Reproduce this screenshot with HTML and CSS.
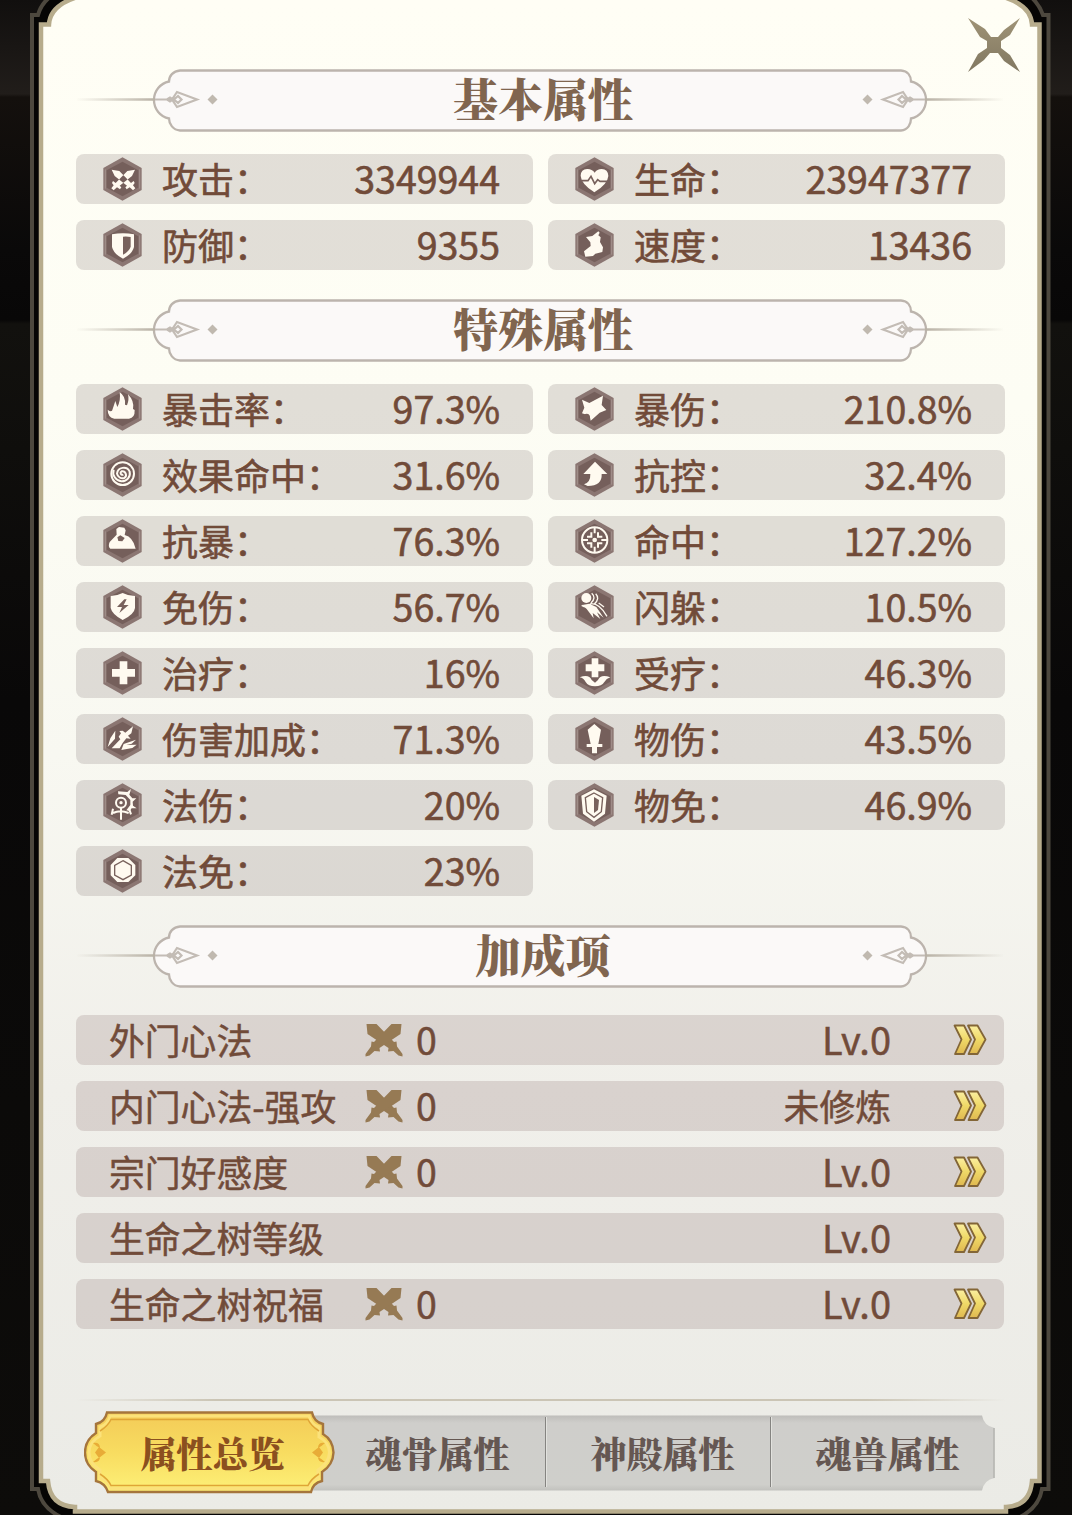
FILE: index.html
```html
<!DOCTYPE html>
<html lang="zh-CN">
<head>
    <meta charset="UTF-8">
    <meta name="viewport" content="width=device-width, initial-scale=1.0">
    <title>属性总览</title>
    <link rel="stylesheet" href="styles.css">
</head>
<body>
    <!-- shared shapes -->
    <svg class="defs" width="0" height="0">
        <defs>
            <linearGradient id="panel-fill" x1="0" y1="0" x2="0" y2="1">
                <stop offset="0" stop-color="#fffef5"/>
                <stop offset=".27" stop-color="#fdfdf4"/>
                <stop offset=".5" stop-color="#f8f8f1"/>
                <stop offset=".72" stop-color="#f0efea"/>
                <stop offset="1" stop-color="#ebebe6"/>
            </linearGradient>
            <linearGradient id="line-left" gradientUnits="userSpaceOnUse" x1="0" y1="0" x2="80" y2="0">
                <stop offset="0" stop-color="#b9b2a6" stop-opacity="0"/>
                <stop offset="1" stop-color="#b9b2a6"/>
            </linearGradient>
            <linearGradient id="gold" x1="0" y1="0" x2="0" y2="1">
                <stop offset="0" stop-color="#f3cb58"/>
                <stop offset=".5" stop-color="#f8dc60"/>
                <stop offset="1" stop-color="#fdf078"/>
            </linearGradient>
            <linearGradient id="bar-fill" x1="0" y1="0" x2="0" y2="1">
                <stop offset="0" stop-color="#bebdba"/>
                <stop offset=".1" stop-color="#cfcecb"/>
                <stop offset=".92" stop-color="#cfcfcb"/>
                <stop offset="1" stop-color="#c2c2be"/>
            </linearGradient>
            <linearGradient id="chevron" x1="0" y1="0" x2="0" y2="1">
                <stop offset="0" stop-color="#fbefa0"/>
                <stop offset=".5" stop-color="#efd867"/>
                <stop offset="1" stop-color="#dfb850"/>
            </linearGradient>
            <linearGradient id="close-fill" x1="0" y1="0" x2="0" y2="1">
                <stop offset="0" stop-color="#9f9376"/>
                <stop offset="1" stop-color="#817861"/>
            </linearGradient>
        </defs>
        <symbol id="hex" viewBox="0 0 117 132">
            <path d="M58.5 1 116 33v66l-57.500 32L1 99V33z" fill="#8b7672"/>
            <path d="M58.500 14 106 40v52l-47.500 26L11 92V40z" fill="#755f5b"/>
            <path d="M7 95V37M110 95V37" stroke="#a79692" stroke-width="2.500"/>
        </symbol>
        <symbol id="banner" viewBox="0 0 930 64">
            <path d="M105 2.500H826C833 3 836 8 836 13.500A18.900 18.900 0 0 1 836 50.500C836 56 833 62 826 62.500H105C98 62 94 56 94 50.500A18.900 18.900 0 0 1 94 13.500C94 8 98 3 105 2.500z" fill="#fbf9f8" stroke="#bcb4ad" stroke-width="2.300"/>
            <g id="banner-end">
                <path d="M2 30.300 80 30.300V32.700H2z" fill="url(#line-left)"/>
                <path d="M80 31.500H97M92 31.500l3-2 3 2-3 2zM97 31.500l5-7.500 20 7.500-20 7.500zM99 31.500l4-3.500 3.500 3.500-3.500 3.500z" fill="none" stroke="#c3bcb5" stroke-width="2.200"/>
                <path d="m137.500 26.500 5 5-5 5-5-5z" fill="#c0b9af"/>
            </g>
            <use href="#banner-end" transform="matrix(-1 0 0 1 930 0)"/>
        </symbol>
        <symbol id="swords" viewBox="0 0 38 34">
            <g fill="#967a54">
                <path id="sword" d="M1.500 1H11.500L29 19 31.500 18.500 32 23.500 37.500 31V33.500L33.500 32.500 28.500 28 23 28.500 23.500 25 2.500 11z"/>
                <use href="#sword" transform="matrix(-1 0 0 1 38 0)"/>
            </g>
        </symbol>
        <symbol id="more" viewBox="0 0 34 32">
            <g fill="url(#chevron)" stroke="#836637" stroke-width="1.800" stroke-linejoin="round">
                <path d="M1.500 1.500H11L18 15.500 11 30H2L8.500 15.500z"/>
                <path d="M15 1.500h9.500L32.500 15.500 24.500 30H15.500L22 15.500z"/>
            </g>
        </symbol>
    </svg>

    <div class="panel">
        <svg class="frame" width="1072" height="1515" viewBox="0 0 1072 1515">
            <path d="M32 15H38Q41 4 50-3H1031Q1039 4 1043 15H1048.500V1489H1042Q1039 1508 1018 1518H63Q41 1508 38 1489H32z" fill="#060504" stroke="#4d483e" stroke-width="4"/>
            <path d="M41 24.500H49Q50 6 76-2.500H1005Q1031 6 1032 24.500H1039.500V1481H1032Q1030 1506 1006 1507V1511.500H75V1507Q50 1506 48 1481H41z" fill="url(#panel-fill)" stroke="#b7ac8c" stroke-width="4.500"/>
        </svg>

        <button class="close" aria-label="关闭">
            <svg width="54" height="56" viewBox="0 0 54 56">
                <path d="M1 1 18 12 24 20H31L37 13 53 1 43 18 34 24V31L43 38 53 55 37 44 31 36H23L17 43 1 55 11 37 20 31V24L13 20z" fill="url(#close-fill)"/>
            </svg>
        </button>

        <section class="section">
            <h2 class="banner"><svg><use href="#banner"/></svg><span>基本属性</span></h2>
            <div class="stats">
                <div class="stat">
                    <svg class="icon" viewBox="0 0 117 132"><use href="#hex"/>
                        <path d="M26 38 49 42 84 78 92 72 95 78 90 85 97 94 90 100 80 91 71 97 67 91 72 86 35 57zM96 38 73 42 38 78 30 72 27 78 32 85 25 94 32 100 42 91 51 97 55 91 50 86 87 57z"/></svg>
                    <span class="label">攻击：</span><span class="value">3349944</span>
                </div>
                <div class="stat">
                    <svg class="icon" viewBox="0 0 117 132"><use href="#hex"/>
                        <path d="M58 106Q18 80 17 56 18 35 38 36 51 36 59 47 66 36 80 36 99 36 100 57 98 82 58 106z"/>
                        <path class="cut" d="M18 71H39L48 58 59 80 68 68 75 73H99"/></svg>
                    <span class="label">生命：</span><span class="value">23947377</span>
                </div>
                <div class="stat">
                    <svg class="icon" viewBox="0 0 117 132"><use href="#hex"/>
                        <path d="M27 34q33-7 66 0v38q-5 21-33 35-28-14-33-35z"/>
                        <path class="dark" d="M60 41q13-1 23 1v29q-4 13-23 24z"/></svg>
                    <span class="label">防御：</span><span class="value">9355</span>
                </div>
                <div class="stat">
                    <svg class="icon" viewBox="0 0 117 132"><use href="#hex"/>
                        <path d="M33 42 52 39 70 25 74 29 70 37 77 43 75 57 84 73 82 87 61 92 54 99 31 101 27 85 47 69 46 58z"/></svg>
                    <span class="label">速度：</span><span class="value">13436</span>
                </div>
            </div>
        </section>

        <section class="section">
            <h2 class="banner"><svg><use href="#banner"/></svg><span>特殊属性</span></h2>
            <div class="stats">
                <div class="stat">
                    <svg class="icon" viewBox="0 0 117 132"><use href="#hex"/>
                        <path d="M14 68q13 11 15-2l8-24 6 18Q54 40 50 16 68 27 66 53l6 2q7-17 3-33Q95 43 90 66l5 3q1 24-17 26H34Q14 91 14 68z"/></svg>
                    <span class="label">暴击率：</span><span class="value">97.3%</span>
                </div>
                <div class="stat">
                    <svg class="icon" viewBox="0 0 117 132"><use href="#hex"/>
                        <path d="M21 38 43 48 84 26 80 54 94 69 74 77 47 101 44 86 21 79 28 62z"/><circle cx="35" cy="89" r="9" class="dark"/></svg>
                    <span class="label">暴伤：</span><span class="value">210.8%</span>
                </div>
                <div class="stat">
                    <svg class="icon" viewBox="0 0 117 132"><use href="#hex"/>
                        <path class="line" d="M61 65A5 5 0 0 1 56 55 11 11 0 0 1 64 75 17 17 0 0 1 42 62 20 20 0 0 1 80 56 24 24 0 0 1 55 85 27 27 0 0 1 32 50"/><circle class="line" cx="59" cy="62" r="34"/></svg>
                    <span class="label">效果命中：</span><span class="value">31.6%</span>
                </div>
                <div class="stat">
                    <svg class="icon" viewBox="0 0 117 132"><use href="#hex"/>
                        <path d="M60 26 97 63H80Q82 99 38 99L27 94Q47 88 46 63H25z"/></svg>
                    <span class="label">抗控：</span><span class="value">32.4%</span>
                </div>
                <div class="stat">
                    <svg class="icon" viewBox="0 0 117 132"><use href="#hex"/>
                        <path d="m40 30 8-6 16 2 4 8-3 14q25 6 33 41H22q-8-6-2-20l21-22z"/><path class="dark" d="m43 55 9-6 13 8-7 10-12-1z"/></svg>
                    <span class="label">抗暴：</span><span class="value">76.3%</span>
                </div>
                <div class="stat">
                    <svg class="icon" viewBox="0 0 117 132"><use href="#hex"/>
                        <circle class="line" cx="59" cy="63" r="38"/>
                        <path class="line" d="M59 24V43M59 83v19M20 63h19M79 63h19"/>
                        <path class="line" d="M36 53H49V40M82 53H69V40M36 73H49V86M82 73H69V86"/><circle cx="59" cy="63" r="7"/></svg>
                    <span class="label">命中：</span><span class="value">127.2%</span>
                </div>
                <div class="stat">
                    <svg class="icon" viewBox="0 0 117 132"><use href="#hex"/>
                        <path d="M59 24q17 9 37 9v36Q94 88 59 105 27 88 23 69V33q18 0 36-9z"/><path class="dark" d="M64 43 42 66H57L49 84 77 60H62l9-17z"/></svg>
                    <span class="label">免伤：</span><span class="value">56.7%</span>
                </div>
                <div class="stat">
                    <svg class="icon" viewBox="0 0 117 132"><use href="#hex"/>
                        <circle cx="34" cy="39" r="15"/>
                        <path class="line thin" d="M50 25q15 13-2 29M62 26q14 14-4 31M20 61q18 11 28-5 26-1 48 38M71 54l16 12"/>
                        <path d="M22 60 43 56 64 66 86 98 66 82 76 102 53 84 56 100 35 72z"/></svg>
                    <span class="label">闪躲：</span><span class="value">10.5%</span>
                </div>
                <div class="stat">
                    <svg class="icon" viewBox="0 0 117 132"><use href="#hex"/>
                        <path d="M50 31H73V54H96V77H73V100H50V77H27V54H50z"/></svg>
                    <span class="label">治疗：</span><span class="value">16%</span>
                </div>
                <div class="stat">
                    <svg class="icon" viewBox="0 0 117 132"><use href="#hex"/>
                        <path d="M50 22H70V40H88V61H70V79H50V61H32V40H50zM14 79Q42 68 50 87L60 95 69 87Q77 68 106 79 94 82 88 93 80 106 60 106 40 106 32 93 26 81 14 79z"/></svg>
                    <span class="label">受疗：</span><span class="value">46.3%</span>
                </div>
                <div class="stat">
                    <svg class="icon" viewBox="0 0 117 132"><use href="#hex"/>
                        <path d="M37 41 36 65 14 90 22 64zM26 94 52 67 47 59 54 49 49 42 59 41 67 47 90 28 85 49 75 56 83 65 70 64 59 78 50 94zM62 81 99 68 86 80 70 84 101 83 88 93 55 99z"/></svg>
                    <span class="label">伤害加成：</span><span class="value">71.3%</span>
                </div>
                <div class="stat">
                    <svg class="icon" viewBox="0 0 117 132"><use href="#hex"/>
                        <path d="m58 21 20 17-8 43h12v9H66v19H51V90H35v-9h12L38 38z"/></svg>
                    <span class="label">物伤：</span><span class="value">43.5%</span>
                </div>
                <div class="stat">
                    <svg class="icon" viewBox="0 0 117 132"><use href="#hex"/>
                        <circle class="line" cx="54" cy="59" r="15"/><circle cx="54" cy="59" r="5"/>
                        <path class="line" d="M54 74v36M30 90q22-11 47 0M30 77l-4 18M79 79l5 15"/>
                        <path d="M45 25 73 27 84 18 79 35 88 46 100 46 89 56 90 68 101 76 86 76 80 84 70 82 82 66 82 51 68 36 46 34z"/></svg>
                    <span class="label">法伤：</span><span class="value">20%</span>
                </div>
                <div class="stat">
                    <svg class="icon" viewBox="0 0 117 132"><use href="#hex"/>
                        <path d="m57 19 38 19-5 54-33 24-33-24-5-54z"/><path class="cut thin" d="m57 30 26 14-4 42-22 17-22-17-4-42z"/><path class="dark" d="m57 42 15 9-3 30-12 9z"/></svg>
                    <span class="label">物免：</span><span class="value">46.9%</span>
                </div>
                <div class="stat">
                    <svg class="icon" viewBox="0 0 117 132"><use href="#hex"/>
                        <path d="M43 27H76L97 48V79L76 99H43L23 79V48z"/><path class="cut thin" d="m60 35 25 14v29L60 92 35 78V49z"/></svg>
                    <span class="label">法免：</span><span class="value">23%</span>
                </div>
            </div>
        </section>

        <section class="section">
            <h2 class="banner"><svg><use href="#banner"/></svg><span>加成项</span></h2>
            <div class="bonuses">
                <div class="bonus">
                    <span class="name">外门心法</span>
                    <span class="attack"><svg><use href="#swords"/></svg>0</span>
                    <span class="level">Lv.0</span>
                    <svg class="more"><use href="#more"/></svg>
                </div>
                <div class="bonus">
                    <span class="name">内门心法-强攻</span>
                    <span class="attack"><svg><use href="#swords"/></svg>0</span>
                    <span class="level untrained">未修炼</span>
                    <svg class="more"><use href="#more"/></svg>
                </div>
                <div class="bonus">
                    <span class="name">宗门好感度</span>
                    <span class="attack"><svg><use href="#swords"/></svg>0</span>
                    <span class="level">Lv.0</span>
                    <svg class="more"><use href="#more"/></svg>
                </div>
                <div class="bonus">
                    <span class="name">生命之树等级</span>
                    <span class="attack"></span>
                    <span class="level">Lv.0</span>
                    <svg class="more"><use href="#more"/></svg>
                </div>
                <div class="bonus">
                    <span class="name">生命之树祝福</span>
                    <span class="attack"><svg><use href="#swords"/></svg>0</span>
                    <span class="level">Lv.0</span>
                    <svg class="more"><use href="#more"/></svg>
                </div>
            </div>
        </section>

        <nav class="tabs">
            <svg class="tabs-bg" width="912" height="84" viewBox="0 0 912 84">
                <path d="M220 4.500H898Q900 15 910.500 17V67Q900 69 898 79.500H220z" fill="url(#bar-fill)"/>
                <path d="M910 17V67" stroke="#b5b5b1" stroke-width="1.500"/>
                <path d="M461.500 6V76M686.500 6V76" stroke="#858481" stroke-width="1"/>
                <path d="M462.500 6V76M687.500 6V76" stroke="#e2e2de" stroke-width="1"/>
                <path d="M23 1.500H228Q230 11 239 13V23Q249 29 249.500 41.500 249 54 238 61V70Q229 72 227 81H24Q21 72 12 70V61Q1 54 1 41.500 1 29 12 22V13Q21 11 23 1.500z" fill="url(#gold)" stroke="#a5753c" stroke-width="2.400"/>
                <path d="M26 5H225Q227 14 235 16V26Q245 31 245.500 41.500 245 52 234 59V67Q226 69 224 77.500H27Q24 69 16 67V59Q5 52 5 41.500 5 31 16 25V16Q24 14 26 5z" fill="none" stroke="#fbe27a" stroke-width="3"/>
                <path d="M235 20Q227 15 224 8.500H27Q24 15 16 20M235 63Q227 68 224 74.500H27Q24 68 16 63" fill="none" stroke="#dfa536" stroke-width="1.500"/>
                <g id="leaf" fill="#e8ac37">
                    <path d="m15 36 7 5.500-7 5.500-4-5.500zM9 32q7-1 7 5-4-2-7-5zM9 51q7 1 7-5-4 2-7 5z"/>
                </g>
                <use href="#leaf" transform="matrix(-1 0 0 1 250 0)"/>
            </svg>
            <a class="tab active">属性总览</a>
            <a class="tab">魂骨属性</a>
            <a class="tab">神殿属性</a>
            <a class="tab">魂兽属性</a>
        </nav>
    </div>
</body>
</html>
```

FILE: styles.css
```css
* {
    box-sizing: border-box;
}
body {
    margin: 0;
    width: 1072px;
    height: 1515px;
    overflow: hidden;
    background: linear-gradient(#110f0e 0, #211d1a 94px, #14100d 97px, #0a0909 250px, #080707 320px, #12110e 324px, #090808 700px, #0d0c0a 100%);
    font-family: "Noto Sans CJK SC", "Noto Sans", sans-serif;
    font-weight: 400;
    color: #714b39;
}
.defs {
    position: absolute;
}
.panel {
    position: relative;
    height: 1515px;
    padding: 68px 66px 0 76px;
}
.frame {
    position: absolute;
    left: 0;
    top: 0;
}
.close {
    position: absolute;
    left: 967px;
    top: 17px;
    padding: 0;
    border: 0;
    background: none;
    cursor: pointer;
}
.close svg {
    display: block;
}
.section {
    position: relative;
    margin-bottom: 28px;
}
.banner {
    display: grid;
    width: 930px;
    height: 64px;
    margin: 0 0 22px -1px;
}
.banner svg {
    grid-area: 1 / 1;
    width: 930px;
    height: 64px;
}
.banner span {
    grid-area: 1 / 1;
    padding-left: 6px;
    text-align: center;
    font-family: "Noto Serif CJK SC", "Noto Sans CJK SC", serif;
    font-weight: 900;
    font-size: 45px;
    line-height: 60px;
    color: #80654f;
}
.stats {
    display: grid;
    grid-template-columns: 457px 457px;
    gap: 16px 15px;
}
.stat {
    display: flex;
    align-items: center;
    height: 50px;
    padding: 0 33px 0 27px;
    border-radius: 8px;
    background: rgba(127, 116, 112, .22);
    line-height: 50px;
}
.icon {
    width: 39px;
    height: 44px;
    margin-right: 20px;
    fill: #fffaf0;
}
.icon .dark {
    fill: #78615c;
}
.icon .line {
    fill: none;
    stroke: #fffaf0;
    stroke-width: 6;
}
.icon .cut {
    fill: none;
    stroke: #78615c;
    stroke-width: 5;
}
.icon .thin {
    stroke-width: 4;
}
.label,
.value {
    padding-bottom: 3px;
    -webkit-text-stroke: .6px #714b39;
}
.label {
    font-size: 36px;
}
.value {
    margin-left: auto;
    font-size: 37.5px;
}
.bonuses {
    display: grid;
    gap: 16px;
    width: 928px;
    margin-top: 27px;
}
.bonus {
    display: grid;
    grid-template-columns: 256px 120px 1fr 96px;
    grid-template-rows: 50px;
    align-items: center;
    height: 50px;
    padding: 0 17px 0 33px;
    border-radius: 8px;
    background: rgba(133, 106, 103, .21);
    font-size: 35.8px;
    line-height: 46px;
    white-space: nowrap;
    -webkit-text-stroke: .5px #714b39;
}
.name,
.level {
    padding-bottom: 3px;
}
.attack {
    display: flex;
    align-items: center;
    height: 50px;
    padding-bottom: 2px;
    font-size: 37.5px;
}
.attack svg {
    width: 38px;
    height: 34px;
    margin: 2px 13px 0 0;
}
.level {
    text-align: right;
    font-size: 38px;
}
.level.untrained {
    font-size: 35.8px;
}
.more {
    width: 34px;
    height: 32px;
    justify-self: end;
}
.tabs {
    position: relative;
    display: grid;
    grid-template-columns: repeat(4, 225px);
    width: 930px;
    height: 93px;
    margin-top: 71px;
    padding: 12px 0 0 24px;
}
.tabs::before {
    content: "";
    position: absolute;
    left: 0;
    top: -1px;
    width: 930px;
    height: 2px;
    background: linear-gradient(90deg, transparent, #cbc5b5 15%, #cbc5b5 85%, transparent);
}
.tabs-bg {
    position: absolute;
    left: 8px;
    top: 11px;
}
.tab {
    position: relative;
    text-align: center;
    font-family: "Noto Serif CJK SC", "Noto Sans CJK SC", serif;
    font-weight: 900;
    font-size: 36px;
    line-height: 81px;
    color: #655752;
}
.tab.active {
    color: #8b501f;
}
```
